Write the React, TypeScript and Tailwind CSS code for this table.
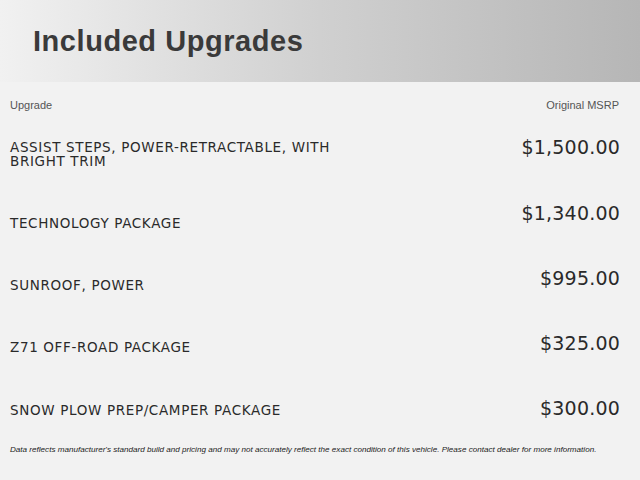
import React from 'react';

interface Upgrade {
  name: string;
  price: string;
  rowClass: string;
  nameClass: string;
}

const upgrades: Upgrade[] = [
  { name: 'ASSIST STEPS, POWER-RETRACTABLE, WITH BRIGHT TRIM', price: '$1,500.00', rowClass: 'h-[66px]', nameClass: 'pt-[1px]' },
  { name: 'TECHNOLOGY PACKAGE', price: '$1,340.00', rowClass: 'h-[65px]', nameClass: 'pt-[11px]' },
  { name: 'SUNROOF, POWER', price: '$995.00', rowClass: 'h-[65px]', nameClass: 'pt-[8px]' },
  { name: 'Z71 OFF-ROAD PACKAGE', price: '$325.00', rowClass: 'h-[65px]', nameClass: 'pt-[5px]' },
  { name: 'SNOW PLOW PREP/CAMPER PACKAGE', price: '$300.00', rowClass: 'h-[30px]', nameClass: 'pt-[3px]' },
];

export default function App() {
  return (
    <div className="w-[640px] h-[480px] overflow-hidden bg-[#f2f2f2]">
      {/* Header band */}
      <div className="h-[82px] bg-gradient-to-r from-[#f1f1f1] via-[#d0d0d0] to-[#b6b6b6] flex items-center pl-[33px] pt-[1px]">
        <h1 className="text-[29px] font-bold text-[#3a3a3a] font-['Liberation_Sans',Arial,sans-serif] tracking-[0.55px]">
          Included Upgrades
        </h1>
      </div>

      <div className="px-[10px] pt-[17px]">
        <div className="flex justify-between text-[11px] text-[#555] font-['Liberation_Sans',Arial,sans-serif] leading-[13px] pr-[11px]">
          <span>Upgrade</span>
          <span>Original MSRP</span>
        </div>

        <div className="mt-[27px] pr-[10px]">
          {upgrades.map((u) => (
            <div key={u.name} className={`flex justify-between items-start ${u.rowClass}`}>
              <div className={`w-[340px] text-[13.5px] leading-[14px] text-[#2a2a2a] font-['DejaVu_Sans',sans-serif] tracking-[0.65px] ${u.nameClass}`}>
                {u.name}
              </div>
              <div className="text-[19px] leading-[17px] text-[#2a2a2a] font-['DejaVu_Sans',sans-serif] tracking-[0.2px]">
                {u.price}
              </div>
            </div>
          ))}
        </div>

        <p className="mt-[15px] text-[8.1px] italic text-[#222] font-['Liberation_Sans',Arial,sans-serif] leading-[10px]">
          Data reflects manufacturer's standard build and pricing and may not accurately reflect the exact condition of this vehicle. Please contact dealer for more information.
        </p>
      </div>
    </div>
  );
}
